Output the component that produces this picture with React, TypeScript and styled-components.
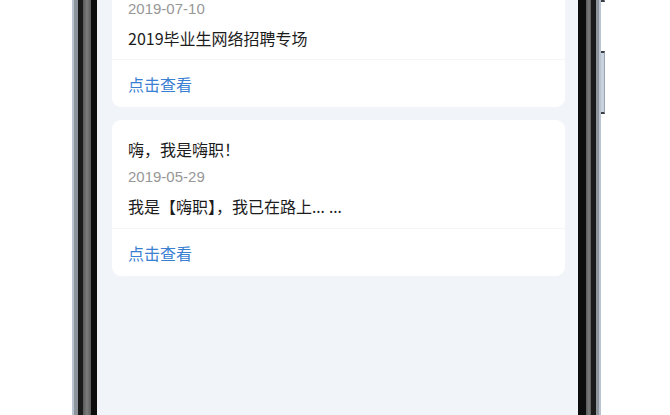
import { FC } from "react";
import styled, { createGlobalStyle } from "styled-components";

const GlobalStyle = createGlobalStyle`
  html, body {
    margin: 0;
    padding: 0;
    background: #ffffff;
    overflow: hidden;
  }
  body {
    font-family: "Noto Sans CJK SC", "Noto Sans", sans-serif;
  }
`;

const Page = styled.div`
  width: 670px;
  height: 415px;
  display: flex;
  padding-left: 72px;
  box-sizing: border-box;
  overflow: hidden;
`;

const Phone = styled.div`
  position: relative;
  width: 529px;
  height: 460px;
  display: flex;
  padding: 0 23px 0 25px;
  box-sizing: border-box;
  background: linear-gradient(
    to right,
    #b9c4d0 0px,
    #b9c4d0 2px,
    #8e949b 2px,
    #8e949b 6px,
    #1b1b1b 6px,
    #1b1b1b 11px,
    #5a5a5a 11px,
    #7c7c7c 15px,
    #5a5a5a 19px,
    #0d0d0d 19px,
    #0d0d0d calc(100% - 15px),
    #5a5a5a calc(100% - 15px),
    #7c7c7c calc(100% - 12px),
    #5a5a5a calc(100% - 10px),
    #1b1b1b calc(100% - 10px),
    #1b1b1b calc(100% - 5px),
    #8e949b calc(100% - 5px),
    #8e949b calc(100% - 2px),
    #b9c4d0 calc(100% - 2px),
    #b9c4d0 100%
  );
`;

const SideButton = styled.div<{ $top: number; $height: number }>`
  position: absolute;
  right: -4px;
  top: ${(p) => p.$top}px;
  width: 4px;
  height: ${(p) => p.$height}px;
  background: #c9d2dc;
  border-top: 2px solid #3a3f46;
  border-bottom: 2px solid #3a3f46;
  border-right: 1px solid #9aa6b3;
  box-sizing: border-box;
`;

const Screen = styled.div`
  flex: 1;
  background: #f1f5f9;
  overflow: hidden;
`;

// list is scrolled: the first card's top lies above the screen
const List = styled.div`
  display: flex;
  flex-direction: column;
  gap: 13px;
  margin-top: -18px;
  padding: 0 13px 0 15px;
`;

const Card = styled.div`
  background: #ffffff;
  border-radius: 9px;
  display: flex;
  flex-direction: column;
`;

const Body = styled.div`
  padding: 18px 16px 10px;
  display: flex;
  flex-direction: column;
`;

const Title = styled.div`
  font-size: 16px;
  line-height: 22px;
  color: #1c1c1c;
`;

const Date = styled.div`
  font-size: 15px;
  line-height: 17px;
  color: #979797;
  font-family: "Liberation Sans", "Noto Sans CJK SC", sans-serif;

  ${Title} + & {
    margin-top: 8px;
  }
`;

const Summary = styled.div`
  margin-top: 10px;
  font-size: 16px;
  line-height: 22px;
  color: #1c1c1c;
`;

const Dots = styled.span`
  font-family: "Noto Sans", sans-serif;
`;

const Footer = styled.div`
  height: 48px;
  border-top: 1px solid #f4f6f8;
  display: flex;
  align-items: center;
  padding: 0 16px;
  box-sizing: border-box;
`;

const Link = styled.a`
  font-size: 16px;
  color: #3a7fd2;
  text-decoration: none;
  cursor: pointer;
`;

type Notice = { title?: string; date: string; summary: string; tail?: string };

const notices: Notice[] = [
  { date: "2019-07-10", summary: "2019毕业生网络招聘专场" },
  { title: "嗨，我是嗨职！", date: "2019-05-29", summary: "我是【嗨职】，我已在路上", tail: "... ..." },
];

const NoticeCard: FC<{ notice: Notice }> = ({ notice }) => (
  <Card>
    <Body>
      {notice.title && <Title>{notice.title}</Title>}
      <Date>{notice.date}</Date>
      <Summary>
        {notice.summary}
        {notice.tail && <Dots>{notice.tail}</Dots>}
      </Summary>
    </Body>
    <Footer>
      <Link>点击查看</Link>
    </Footer>
  </Card>
);

export default function App() {
  return (
    <>
      <GlobalStyle />
      <Page>
        <Phone>
          <SideButton $top={-20} $height={22} />
          <SideButton $top={51} $height={63} />
          <Screen>
            <List>
              {notices.map((n) => (
                <NoticeCard key={n.date} notice={n} />
              ))}
            </List>
          </Screen>
        </Phone>
      </Page>
    </>
  );
}
